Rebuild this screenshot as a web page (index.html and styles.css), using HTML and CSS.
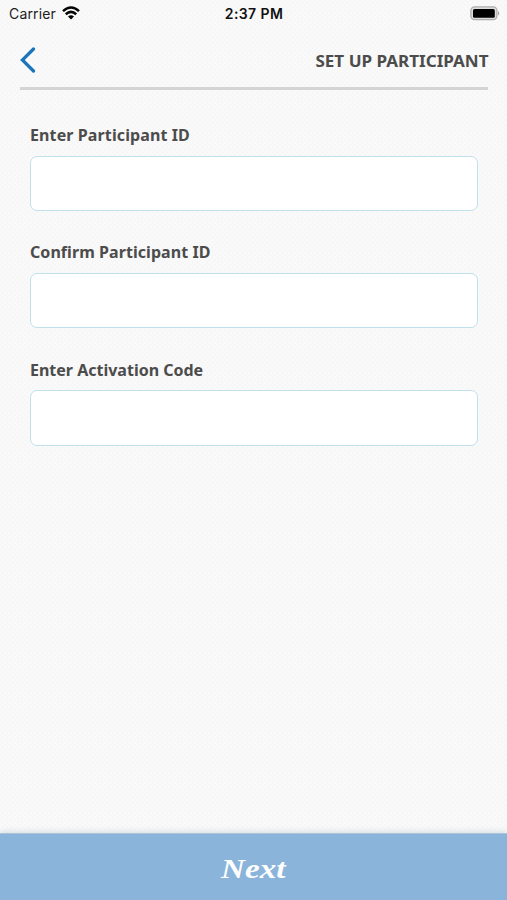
FILE: index.html
```html
<!DOCTYPE html>
<html lang="en">
<head>
<meta charset="utf-8">
<meta name="viewport" content="width=device-width, initial-scale=1">
<title>Set Up Participant</title>
<link rel="stylesheet" href="styles.css">
</head>
<body>
<div class="screen">
  <div class="status">
    <div class="status-left">
      <span class="carrier">Carrier</span>
      <svg class="wifi" width="18" height="14" viewBox="0 0 18 14" fill="none" stroke="#050505" stroke-width="2.5">
        <path d="M1 5.1Q9-2.2 17 5.1"/>
        <path d="M3.8 8.2Q9 3.5 14.2 8.2"/>
        <path d="M6 10.5Q9 7.8 12 10.5L9 13.6Z" fill="#050505" stroke="none"/>
      </svg>
    </div>
    <span class="time">2:37 PM</span>
    <svg class="battery" width="30" height="15" viewBox="0 0 30 15">
      <rect x=".9" y=".9" width="26" height="12.8" rx="3.6" fill="#ddd" stroke="#adadad" stroke-width="1.3"/>
      <rect x="3" y="3" width="21.8" height="8.8" rx="1.6" fill="#000"/>
      <path d="M28 4.8Q30.4 7.3 28 9.8Z" fill="#a5a5a5"/>
    </svg>
  </div>
  <header class="header">
    <svg class="back" width="16" height="26" viewBox="0 0 16 26" fill="none" stroke="#1b75bb" stroke-width="3.2" stroke-linecap="round" stroke-linejoin="miter">
      <path d="M13.5 2L2.4 13L13.5 24"/>
    </svg>
    <h1 class="title">SET UP PARTICIPANT</h1>
  </header>
  <main class="form">
    <div class="field"><label class="label label-id" for="pid">Enter Participant ID</label><input class="input" id="pid"></div>
    <div class="field"><label class="label" for="pid2">Confirm Participant ID</label><input class="input" id="pid2"></div>
    <div class="field"><label class="label label-code" for="code">Enter Activation Code</label><input class="input" id="code"></div>
  </main>
  <button class="next"><span class="next-text">Next</span></button>
</div>
</body>
</html>
```
FILE: styles.css
```css
* { box-sizing: border-box; }
body { margin: 0; }
.screen {
  height: 900px;
  display: flex;
  flex-direction: column;
  background-color: #fafafa;
  background-image:
    radial-gradient(circle, #f4f4f4 .8px, transparent 1.5px),
    radial-gradient(circle, #f4f4f4 .8px, transparent 1.5px);
  background-size: 5px 5px;
  background-position: 0 0, 2.5px 2.5px;
}
.status {
  height: 28px;
  padding: 0 7px 0 9px;
  display: grid;
  grid-template-columns: 1fr auto 1fr;
  align-items: center;
  font-family: Inter, sans-serif;
  font-size: 14px;
  line-height: 28px;
  color: #1c1c1c;
}
.status-left { display: flex; align-items: center; gap: 6px; }
.carrier { letter-spacing: .15px; }
.wifi { margin-top: -2px; }
.time { font-weight: 600; color: #111; letter-spacing: .4px; margin-right: 1px; }
.battery { justify-self: end; margin-top: -1px; }
.header {
  height: 62px;
  margin: 0 19px 0 20px;
  padding-top: 5px;
  border-bottom: 3px solid #d4d4d4;
  display: flex;
  align-items: center;
  justify-content: space-between;
}
.title, .label {
  font-family: "Noto Sans", sans-serif;
  font-weight: 700;
  font-size: 16px;
  line-height: 22px;
  color: #4c4c4c;
}
.title {
  margin: 1px 0 0;
  transform: scaleX(1.065);
  transform-origin: right center;
}
.form {
  flex: 1;
  padding: 34px 29px 0 30px;
  display: flex;
  flex-direction: column;
  gap: 30px;
}
.field { display: flex; flex-direction: column; height: 87.3px; }
.label { height: 31.5px; letter-spacing: .06px; }
.label-id { letter-spacing: .11px; }
.label-code { letter-spacing: 0; }
.input {
  width: 100%;
  height: 55.5px;
  padding: 0 12px;
  border: 1.5px solid #c0e0ec;
  border-radius: 7px;
  background: #fff;
  font: 16px "Noto Sans", sans-serif;
  outline: none;
}
.next {
  height: 67px;
  padding: 4px 0 0;
  border: 0;
  border-top: 1px solid #a9c5dc;
  background: #8ab4da;
  box-shadow: 0 -2px 5px rgba(125, 150, 165, .22);
  color: #fff;
  font: italic 700 28px/36px "Liberation Serif", serif;
}
.next-text { display: inline-block; transform: scaleX(1.18); }
```
